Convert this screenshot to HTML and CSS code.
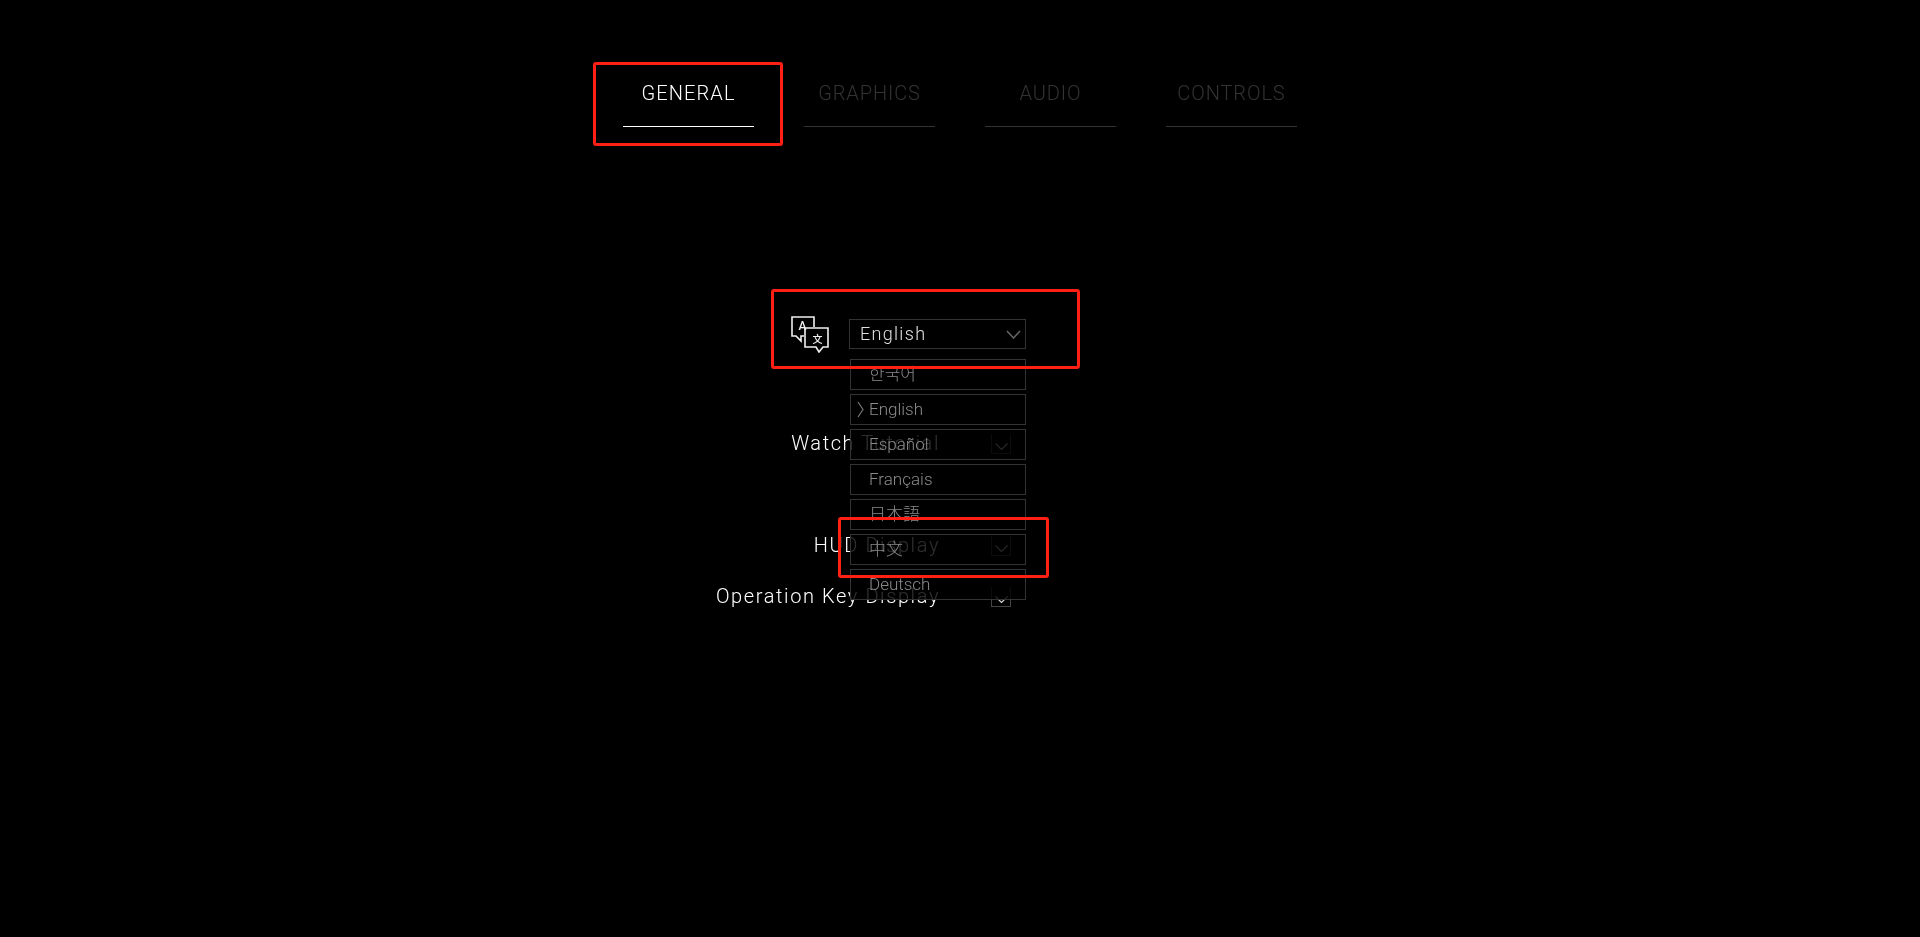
FILE: index.html
```html
<!DOCTYPE html>
<html lang="en">
<head>
<meta charset="utf-8">
<title>Settings</title>
<link rel="stylesheet" href="styles.css">
</head>
<body>
<nav class="tabs">
  <a class="tab tab-active">GENERAL</a>
  <a class="tab">GRAPHICS</a>
  <a class="tab">AUDIO</a>
  <a class="tab">CONTROLS</a>
</nav>
<main class="settings">
  <div class="language-row">
    <svg class="language-icon" viewBox="0 0 38 37" width="38" height="37" aria-hidden="true">
      <path class="bubble" d="M23 11V1H1V20H5L10 25V20H13"/>
      <path class="bubble" d="M14 12H37V31H32L28 36L25 31H14Z"/>
      <text class="bubble-letter" x="11.500" y="14" text-anchor="middle">A</text>
      <text class="bubble-letter bubble-letter-cjk" x="26.500" y="27" text-anchor="middle" lang="zh">文</text>
    </svg>
    <div class="select">
      <span class="select-value">English</span>
      <svg class="chevron select-chevron" viewBox="0 0 15 9" width="15" height="9" aria-hidden="true"><path d="M1 1L7.5 8L14 1"/></svg>
      <ul class="dropdown">
        <li class="option" lang="ko">한국어</li>
        <li class="option option-current"><svg class="marker" viewBox="0 0 7 17" width="7" height="17" aria-hidden="true"><path d="M1 1L6 8.500L1 16"/></svg>English</li>
        <li class="option">Español</li>
        <li class="option">Français</li>
        <li class="option" lang="ja">日本語</li>
        <li class="option" lang="zh">中文</li>
        <li class="option">Deutsch</li>
      </ul>
    </div>
  </div>
  <div class="row row-tutorial">
    <span class="label">Watch Tutorial</span>
    <span class="toggle"><svg class="chevron" viewBox="0 0 13 7" width="13" height="7" aria-hidden="true"><path d="M0.500 0.500L6.500 6.500L12.500 0.500"/></svg></span>
  </div>
  <div class="row row-hud">
    <span class="label">HUD Display</span>
    <span class="toggle"><svg class="chevron" viewBox="0 0 13 7" width="13" height="7" aria-hidden="true"><path d="M0.500 0.500L6.500 6.500L12.500 0.500"/></svg></span>
  </div>
  <div class="row row-keys">
    <span class="label">Operation Key Display</span>
    <span class="toggle"><svg class="chevron" viewBox="0 0 13 7" width="13" height="7" aria-hidden="true"><path d="M0.500 0.500L6.500 6.500L12.500 0.500"/></svg></span>
  </div>
</main>
<div class="mark mark-tab"></div>
<div class="mark mark-language"></div>
<div class="mark mark-chinese"></div>
</body>
</html>
```

FILE: styles.css
```css
html, body {
  margin: 0;
  height: 100%;
  background: #000;
  overflow: hidden;
}

body {
  position: relative;
  font-family: Roboto, "Noto Sans CJK KR", sans-serif;
  font-weight: 300;
  color: #fff;
}

.tabs {
  display: flex;
  justify-content: center;
  gap: 50px;
  padding-top: 79px;
  will-change: opacity;
}

.tab {
  width: 131px;
  height: 47px;
  line-height: 28px;
  font-size: 20px;
  letter-spacing: 0.9px;
  text-align: center;
  color: #333;
  border-bottom: 1px solid #333;
}

.tab-active {
  color: #fff;
  letter-spacing: 1.1px;
  border-bottom-color: #fff;
}

.settings {
  margin-top: 192px;
  will-change: opacity;
}

.language-row {
  display: flex;
  justify-content: center;
  align-items: center;
  gap: 20px;
  height: 30px;
  padding-right: 103px;
}

.language-icon {
  flex: none;
}

.bubble {
  fill: none;
  stroke: #f0f0f0;
  stroke-width: 1.6;
}

.bubble-letter {
  font-size: 12px;
  font-weight: 500;
  fill: #f0f0f0;
}

.bubble-letter-cjk {
  font-size: 10px;
}

.select {
  position: relative;
  box-sizing: border-box;
  display: flex;
  align-items: center;
  justify-content: space-between;
  width: 177px;
  height: 30px;
  padding: 0 4px 0 10px;
  border: 1px solid #333;
  font-size: 18px;
  letter-spacing: 1.3px;
  color: #e0e0e0;
}

.select-value {
  margin-bottom: 2px;
}

.chevron {
  fill: none;
  stroke: #ccc;
  stroke-width: 1.2;
}

.select-chevron {
  stroke: #666;
  stroke-width: 1.5;
}

.dropdown {
  position: absolute;
  top: 39px;
  left: 0;
  display: flex;
  flex-direction: column;
  gap: 4px;
  width: 176px;
  margin: 0;
  padding: 0;
  list-style: none;
  z-index: 2;
}

.option {
  position: relative;
  box-sizing: border-box;
  height: 31px;
  line-height: 29px;
  padding-left: 18px;
  border: 1px solid #333;
  background: rgba(0, 0, 0, 0.82);
  font-size: 17px;
  letter-spacing: 0;
  color: #8a8a8a;
}

.marker {
  position: absolute;
  left: 6px;
  top: 6px;
  fill: none;
  stroke: #777;
  stroke-width: 1.2;
}

.row {
  display: flex;
  align-items: flex-start;
  height: 20px;
}

.row-tutorial { margin-top: 85px; }
.row-hud { margin-top: 82px; }
.row-keys { margin-top: 31px; }

.label {
  box-sizing: border-box;
  width: 940px;
  text-align: right;
  font-size: 20px;
  line-height: 18px;
  letter-spacing: 1.6px;
  color: #fff;
  white-space: nowrap;
}

.toggle {
  box-sizing: border-box;
  display: flex;
  justify-content: center;
  padding-top: 9px;
  width: 20px;
  height: 20px;
  margin-left: 51px;
  border: 1px solid #444;
  border-top: 0;
}

.mark {
  position: absolute;
  box-sizing: border-box;
  border: 3px solid #ff1f14;
  border-radius: 3px;
  z-index: 5;
}

.mark-tab { left: 593px; top: 62px; width: 190px; height: 84px; }
.mark-language { left: 771px; top: 289px; width: 309px; height: 80px; }
.mark-chinese { left: 838px; top: 517px; width: 211px; height: 61px; }
```
